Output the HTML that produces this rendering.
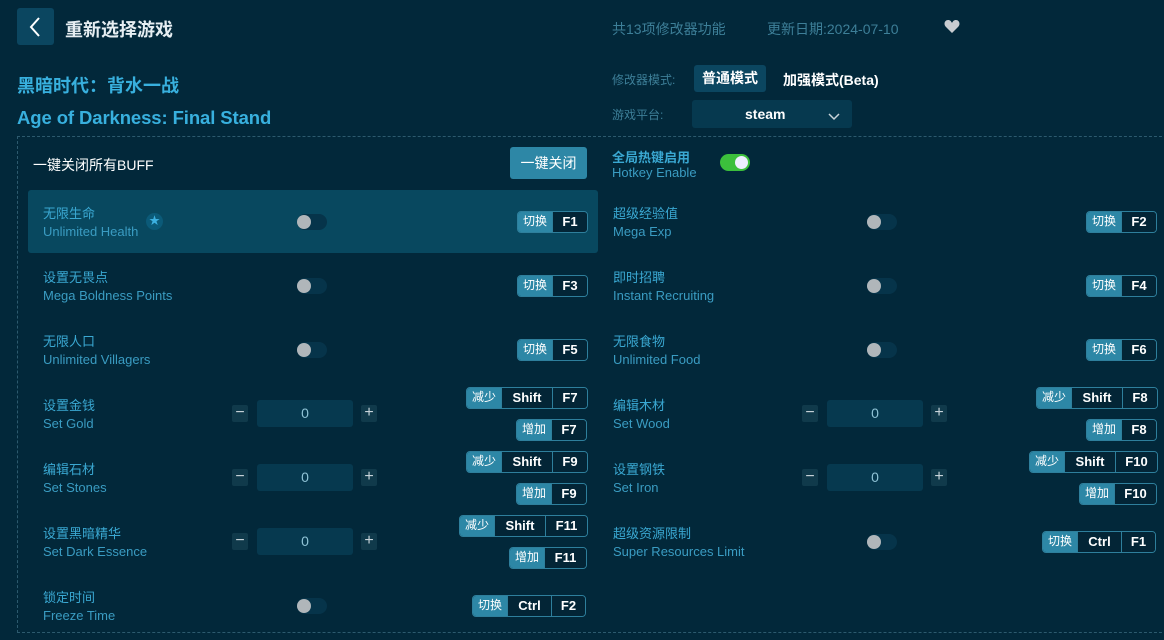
<!DOCTYPE html>
<html><head><meta charset="utf-8"><style>
*{margin:0;padding:0;box-sizing:border-box}
body{width:1164px;height:640px;background:#02283a;font-family:"Liberation Sans","Noto Sans CJK SC",sans-serif;position:relative;overflow:hidden;color:#fff}
.a{position:absolute}
.cn{font-size:13px;color:#3aa8d2;line-height:16px}
.en{font-size:13px;color:#3a9cc2;line-height:16px}
.tg{position:absolute;width:30px;height:16px;border-radius:8px;background:#06344a}
.tg:before{content:"";position:absolute;left:0;top:1px;width:14px;height:14px;border-radius:7px;background:#b0b6ba}
.kg{position:absolute;display:flex;height:22px;border:1px solid #2e7f9c;border-radius:4px;overflow:hidden;font-size:13px;line-height:20px;font-weight:bold}
.kg .l{background:#2d87a6;width:34px;text-align:center;font-weight:normal;font-size:12px;line-height:18px}
.kg .k{text-align:center;border-left:1px solid #2e7f9c;background:#032536}
.num{position:absolute;width:96px;height:27px;background:#06394f;border-radius:3px;text-align:center;line-height:27px;color:#8fc3d6;font-size:14px}
.pm{position:absolute;width:16px;height:17px;background:#103a4b;border-radius:2px;color:#c8d4da;text-align:center;line-height:16px;font-size:16px}
</style></head><body>
<div class="a" style="left:17px;top:8px;width:37px;height:37px;background:#0b4660;border-radius:3px"></div>
<svg class="a" style="left:25px;top:15px" width="20" height="24"><path d="M14 3 L6 12 L14 21" stroke="#fff" stroke-width="2" fill="none"/></svg>
<div class="a" style="left:65px;top:16px;font-size:18px;font-weight:bold;color:#e6eef2">重新选择游戏</div>
<div class="a" style="left:612px;top:19px;font-size:14px;color:#3d7f98">共13项修改器功能</div>
<div class="a" style="left:767px;top:19px;font-size:14px;color:#3d7f98">更新日期:2024-07-10</div>
<svg class="a" style="left:944px;top:19px" width="16" height="15"><path d="M8 14 L2 8 C-1 5 1 1 4 1 C6 1 7 2 8 4 C9 2 10 1 12 1 C15 1 17 5 14 8 Z" fill="#c8ccd0"/></svg>
<div class="a" style="left:17px;top:72px;font-size:18px;font-weight:bold;color:#38b0de">黑暗时代：背水一战</div>
<div class="a" style="left:17px;top:107px;font-size:18.5px;font-weight:bold;color:#38b0de;letter-spacing:-0.1px">Age of Darkness: Final Stand</div>
<div class="a" style="left:612px;top:71px;font-size:12px;color:#3d7f98">修改器模式:</div>
<div class="a" style="left:694px;top:65px;width:72px;height:27px;background:#0b4660;border-radius:3px;font-size:14px;line-height:27px;text-align:center;font-weight:bold">普通模式</div>
<div class="a" style="left:783px;top:70px;font-size:14px;font-weight:bold">加强模式(Beta)</div>
<div class="a" style="left:612px;top:106px;font-size:12px;color:#3d7f98">游戏平台:</div>
<div class="a" style="left:692px;top:100px;width:160px;height:28px;background:#06394f;border-radius:3px;font-size:14px;line-height:28px;font-weight:bold;padding-left:53px">steam</div>
<svg class="a" style="left:828px;top:113px" width="12" height="8"><path d="M1 1 L6 6 L11 1" stroke="#c8d4da" stroke-width="1.5" fill="none"/></svg>
<div class="a" style="left:17px;top:136px;width:1160px;height:497px;border:1px dashed #2c5a6e"></div>
<div class="a" style="left:33px;top:155px;font-size:14px">一键关闭所有BUFF</div>
<div class="a" style="left:510px;top:147px;width:77px;height:32px;background:#2d87a6;border-radius:3px;font-size:14px;line-height:32px;text-align:center">一键关闭</div>
<div class="a" style="left:612px;top:147px;font-size:13px;font-weight:bold;color:#3aa8d2">全局热键启用</div>
<div class="a en" style="left:612px;top:165px">Hotkey Enable</div>
<div class="a" style="left:720px;top:154px;width:30px;height:17px;border-radius:9px;background:#3cbf3c"></div>
<div class="a" style="left:735px;top:156px;width:13px;height:13px;border-radius:7px;background:#eef"></div>
<div class="a" style="left:28px;top:190px;width:570px;height:63px;background:#08485f;border-radius:3px"></div>
<div class="a" style="left:146px;top:213px;width:17px;height:17px;border-radius:9px;background:#0b5a78;color:#3cb0e0;font-size:11px;text-align:center;line-height:17px">★</div>

<div class="a cn" style="left:43px;top:206px">无限生命</div><div class="a en" style="left:43px;top:224px">Unlimited Health</div>
<div class="tg" style="left:297px;top:214px"></div>
<div class="kg" style="left:517px;top:211px"><div class="l">切换</div><div class="k" style="width:35px">F1</div></div>

<div class="a cn" style="left:43px;top:270px">设置无畏点</div><div class="a en" style="left:43px;top:288px">Mega Boldness Points</div>
<div class="tg" style="left:297px;top:278px"></div>
<div class="kg" style="left:517px;top:275px"><div class="l">切换</div><div class="k" style="width:35px">F3</div></div>

<div class="a cn" style="left:43px;top:334px">无限人口</div><div class="a en" style="left:43px;top:352px">Unlimited Villagers</div>
<div class="tg" style="left:297px;top:342px"></div>
<div class="kg" style="left:517px;top:339px"><div class="l">切换</div><div class="k" style="width:35px">F5</div></div>

<div class="a cn" style="left:43px;top:398px">设置金钱</div><div class="a en" style="left:43px;top:416px">Set Gold</div>
<div class="pm" style="left:232px;top:405px">−</div><div class="num" style="left:257px;top:400px">0</div><div class="pm" style="left:361px;top:405px">+</div>
<div class="kg" style="left:466px;top:387px"><div class="l">减少</div><div class="k" style="width:51px">Shift</div><div class="k" style="width:35px">F7</div></div>
<div class="kg" style="left:516px;top:419px"><div class="l">增加</div><div class="k" style="width:35px">F7</div></div>

<div class="a cn" style="left:43px;top:462px">编辑石材</div><div class="a en" style="left:43px;top:480px">Set Stones</div>
<div class="pm" style="left:232px;top:469px">−</div><div class="num" style="left:257px;top:464px">0</div><div class="pm" style="left:361px;top:469px">+</div>
<div class="kg" style="left:466px;top:451px"><div class="l">减少</div><div class="k" style="width:51px">Shift</div><div class="k" style="width:35px">F9</div></div>
<div class="kg" style="left:516px;top:483px"><div class="l">增加</div><div class="k" style="width:35px">F9</div></div>

<div class="a cn" style="left:43px;top:526px">设置黑暗精华</div><div class="a en" style="left:43px;top:544px">Set Dark Essence</div>
<div class="pm" style="left:232px;top:533px">−</div><div class="num" style="left:257px;top:528px">0</div><div class="pm" style="left:361px;top:533px">+</div>
<div class="kg" style="left:459px;top:515px"><div class="l">减少</div><div class="k" style="width:51px">Shift</div><div class="k" style="width:42px">F11</div></div>
<div class="kg" style="left:509px;top:547px"><div class="l">增加</div><div class="k" style="width:42px">F11</div></div>

<div class="a cn" style="left:43px;top:590px">锁定时间</div><div class="a en" style="left:43px;top:608px">Freeze Time</div>
<div class="tg" style="left:297px;top:598px"></div>
<div class="kg" style="left:472px;top:595px"><div class="l">切换</div><div class="k" style="width:44px">Ctrl</div><div class="k" style="width:34px">F2</div></div>

<div class="a cn" style="left:613px;top:206px">超级经验值</div><div class="a en" style="left:613px;top:224px">Mega Exp</div>
<div class="tg" style="left:867px;top:214px"></div>
<div class="kg" style="left:1086px;top:211px"><div class="l">切换</div><div class="k" style="width:35px">F2</div></div>

<div class="a cn" style="left:613px;top:270px">即时招聘</div><div class="a en" style="left:613px;top:288px">Instant Recruiting</div>
<div class="tg" style="left:867px;top:278px"></div>
<div class="kg" style="left:1086px;top:275px"><div class="l">切换</div><div class="k" style="width:35px">F4</div></div>

<div class="a cn" style="left:613px;top:334px">无限食物</div><div class="a en" style="left:613px;top:352px">Unlimited Food</div>
<div class="tg" style="left:867px;top:342px"></div>
<div class="kg" style="left:1086px;top:339px"><div class="l">切换</div><div class="k" style="width:35px">F6</div></div>

<div class="a cn" style="left:613px;top:398px">编辑木材</div><div class="a en" style="left:613px;top:416px">Set Wood</div>
<div class="pm" style="left:802px;top:405px">−</div><div class="num" style="left:827px;top:400px">0</div><div class="pm" style="left:931px;top:405px">+</div>
<div class="kg" style="left:1036px;top:387px"><div class="l">减少</div><div class="k" style="width:51px">Shift</div><div class="k" style="width:35px">F8</div></div>
<div class="kg" style="left:1086px;top:419px"><div class="l">增加</div><div class="k" style="width:35px">F8</div></div>

<div class="a cn" style="left:613px;top:462px">设置钢铁</div><div class="a en" style="left:613px;top:480px">Set Iron</div>
<div class="pm" style="left:802px;top:469px">−</div><div class="num" style="left:827px;top:464px">0</div><div class="pm" style="left:931px;top:469px">+</div>
<div class="kg" style="left:1029px;top:451px"><div class="l">减少</div><div class="k" style="width:51px">Shift</div><div class="k" style="width:42px">F10</div></div>
<div class="kg" style="left:1079px;top:483px"><div class="l">增加</div><div class="k" style="width:42px">F10</div></div>

<div class="a cn" style="left:613px;top:526px">超级资源限制</div><div class="a en" style="left:613px;top:544px">Super Resources Limit</div>
<div class="tg" style="left:867px;top:534px"></div>
<div class="kg" style="left:1042px;top:531px"><div class="l">切换</div><div class="k" style="width:44px">Ctrl</div><div class="k" style="width:34px">F1</div></div>
</body></html>
